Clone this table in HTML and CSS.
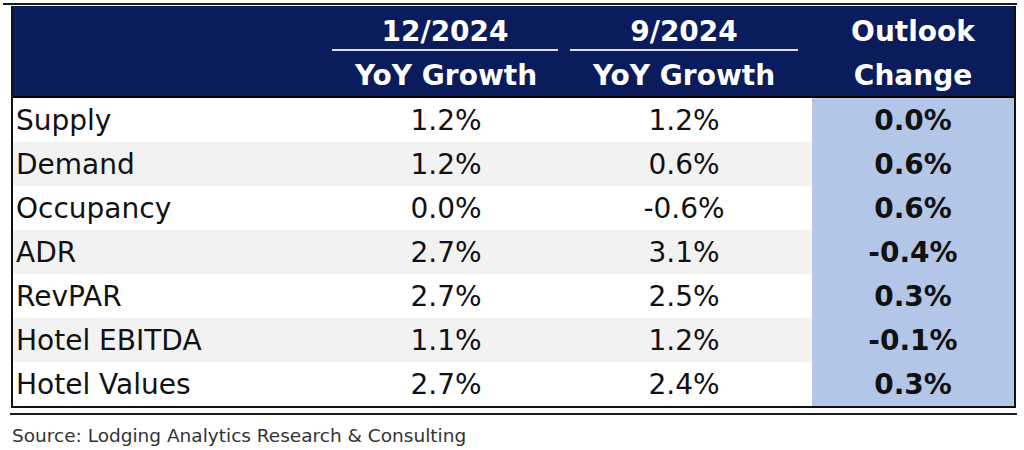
FILE: index.html
```html
<!DOCTYPE html>
<html>
<head>
<meta charset="utf-8">
<title>Hotel Outlook</title>
<link rel="stylesheet" href="styles.css">
</head>
<body>
<div class="page">
  <div class="rule rule-top"></div>
  <div class="table">
    <div class="head">
      <div class="hcell"></div>
      <div class="hcell c1"><span class="l1 ul">12/2024</span><span class="l2">YoY Growth</span></div>
      <div class="hcell c2"><span class="l1 ul">9/2024</span><span class="l2">YoY Growth</span></div>
      <div class="hcell c3"><span class="l1">Outlook</span><span class="l2">Change</span></div>
    </div>
    <div class="row"><div class="lab">Supply</div><div class="v c1">1.2%</div><div class="v c2">1.2%</div><div class="v c3">0.0%</div></div>
    <div class="row"><div class="lab">Demand</div><div class="v c1">1.2%</div><div class="v c2">0.6%</div><div class="v c3">0.6%</div></div>
    <div class="row"><div class="lab">Occupancy</div><div class="v c1">0.0%</div><div class="v c2">-0.6%</div><div class="v c3">0.6%</div></div>
    <div class="row"><div class="lab">ADR</div><div class="v c1">2.7%</div><div class="v c2">3.1%</div><div class="v c3">-0.4%</div></div>
    <div class="row"><div class="lab">RevPAR</div><div class="v c1">2.7%</div><div class="v c2">2.5%</div><div class="v c3">0.3%</div></div>
    <div class="row"><div class="lab">Hotel EBITDA</div><div class="v c1">1.1%</div><div class="v c2">1.2%</div><div class="v c3">-0.1%</div></div>
    <div class="row"><div class="lab">Hotel Values</div><div class="v c1">2.7%</div><div class="v c2">2.4%</div><div class="v c3">0.3%</div></div>
  </div>
  <div class="rule rule-bottom"></div>
  <p class="source">Source: Lodging Analytics Research &amp; Consulting</p>
</div>
</body>
</html>
```
FILE: styles.css
```css
html, body {
  margin: 0;
  padding: 0;
  background: #ffffff;
}

body {
  font-family: "DejaVu Sans", "Liberation Sans", sans-serif;
  color: #111111;
}

.page {
  padding-top: 3px;
}

.rule {
  height: 2px;
  background: #1a1a1a;
}

.rule-top {
  margin: 0 7px 0 3px;
}

.table {
  margin: 1px 8px 0 11px;
  border: 2px solid #111111;
  border-top: 0;
}

.head,
.row {
  display: grid;
  grid-template-columns: 313px 240px 246px 202px;
}

.head {
  height: 90px;
  background: #0b1c5c;
  border-bottom: 2px solid #000000;
  color: #ffffff;
  font-weight: bold;
  font-size: 28px;
}

.hcell {
  display: flex;
  flex-direction: column;
  align-items: center;
  padding-top: 10px;
}

.l1 {
  line-height: 32px;
  padding-bottom: 1px;
  border-bottom: 2px solid transparent;
}

.ul {
  align-self: stretch;
  text-align: center;
  margin: 0 8px 0 6px;
  border-bottom-color: #dcdfe8;
}

.c2 .ul {
  margin: 0 4px;
}

.l2 {
  margin-top: 9px;
  line-height: 32px;
}

.c2 {
  padding-right: 10px;
}

.row {
  height: 44px;
  font-size: 28px;
  background: #ffffff;
}

.row:nth-child(odd) {
  background: #f2f2f2;
}

.lab,
.v {
  display: flex;
  align-items: center;
  padding-top: 1px;
}

.lab {
  padding-left: 3px;
}

.v {
  justify-content: center;
}

.row .c3 {
  background: #b4c6e7;
  font-weight: bold;
}

.rule-bottom {
  margin: 5px 7px 0 10px;
}

.source {
  margin: 10px 0 0 12px;
  font-size: 18.5px;
  line-height: 22px;
  color: #333333;
}
```
